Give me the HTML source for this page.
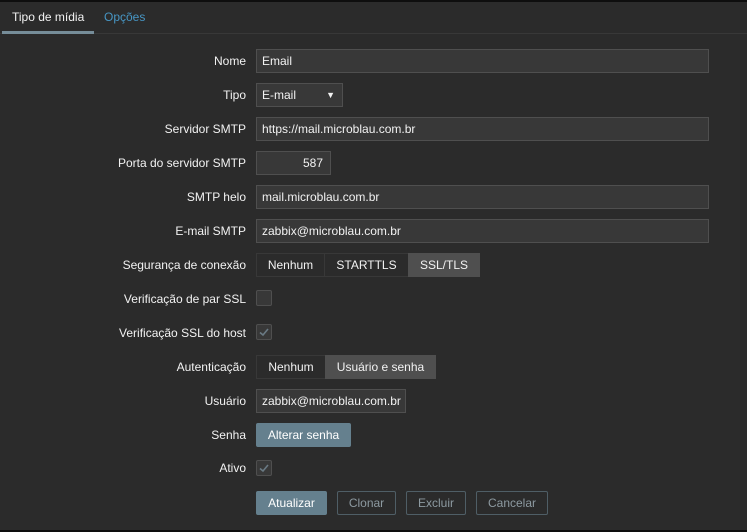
<!DOCTYPE html>
<html><head><meta charset="utf-8"><style>
*{box-sizing:border-box;margin:0;padding:0}
html,body{width:747px;height:532px;overflow:hidden;background:#2b2b2b;font-family:"Liberation Sans",Arial,sans-serif;font-size:12px;color:#f2f2f2}
.top{position:absolute;left:0;top:0;width:747px;height:2px;background:#0e0e0e}
.bot{position:absolute;left:0;top:530px;width:747px;height:2px;background:#0e0e0e}
.tabline{position:absolute;left:0;top:33px;width:747px;height:1px;background:#383838}
.tab{position:absolute;top:10px}
.uline{position:absolute;left:2px;top:31px;width:92px;height:3px;background:#768d99}
.lbl{position:absolute;right:501px;text-align:right;white-space:nowrap;line-height:24px}
.in{position:absolute;left:256px;height:24px;background:#383838;border:1px solid #4f4f4f;line-height:22px;padding-left:5px;white-space:nowrap}
.seg{position:absolute;height:24px;background:#2b2b2b;border:1px solid #383838;line-height:22px;text-align:center}
.seg.on{background:#4f4f4f;border-color:#4f4f4f}
.cb{position:absolute;left:256px;width:16px;height:16px;background:#383838;border:1px solid #4f4f4f;border-radius:2px}
.btn{position:absolute;height:24px;line-height:22px;text-align:center;border-radius:2px}
.pri{background:#65808e;border:1px solid #65808e;color:#fff}
.sec{border:1px solid #4f5e66;color:#8d9aa1}
</style></head><body>
<div class="top"></div><div class="bot"></div>
<div class="tabline"></div><div class="uline"></div>
<div class="tab" style="left:12px">Tipo de mídia</div>
<div class="tab" style="left:104px;color:#4796c4">Opções</div>

<div class="lbl" style="top:49px">Nome</div><div class="in" style="top:49px;width:453px">Email</div>
<div class="lbl" style="top:83px">Tipo</div><div class="in" style="top:83px;width:87px">E-mail<span style="position:absolute;right:7px;font-size:9px">▼</span></div>
<div class="lbl" style="top:117px">Servidor SMTP</div><div class="in" style="top:117px;width:453px">https://mail.microblau.com.br</div>
<div class="lbl" style="top:151px">Porta do servidor SMTP</div><div class="in" style="top:151px;width:75px;text-align:right;padding-right:7px">587</div>
<div class="lbl" style="top:185px">SMTP helo</div><div class="in" style="top:185px;width:453px">mail.microblau.com.br</div>
<div class="lbl" style="top:219px">E-mail SMTP</div><div class="in" style="top:219px;width:453px">zabbix@microblau.com.br</div>
<div class="lbl" style="top:253px">Segurança de conexão</div>
<div class="seg" style="top:253px;left:256px;width:69px">Nenhum</div>
<div class="seg" style="top:253px;left:324px;width:85px">STARTTLS</div>
<div class="seg on" style="top:253px;left:408px;width:72px">SSL/TLS</div>
<div class="lbl" style="top:287px">Verificação de par SSL</div><div class="cb" style="top:290px"></div>
<div class="lbl" style="top:321px">Verificação SSL do host</div><div class="cb" style="top:324px"><svg width="14" height="14" style="position:absolute;left:0;top:0"><path d="M3 7.5 L6 10 L11 4" fill="none" stroke="#6a7a84" stroke-width="1.6"/></svg></div>
<div class="lbl" style="top:355px">Autenticação</div>
<div class="seg" style="top:355px;left:256px;width:70px">Nenhum</div>
<div class="seg on" style="top:355px;left:325px;width:111px">Usuário e senha</div>
<div class="lbl" style="top:389px">Usuário</div><div class="in" style="top:389px;width:150px">zabbix@microblau.com.br</div>
<div class="lbl" style="top:423px">Senha</div><div class="btn pri" style="top:423px;left:256px;width:95px">Alterar senha</div>
<div class="lbl" style="top:456px">Ativo</div><div class="cb" style="top:460px"><svg width="14" height="14" style="position:absolute;left:0;top:0"><path d="M3 7.5 L6 10 L11 4" fill="none" stroke="#6a7a84" stroke-width="1.6"/></svg></div>
<div class="btn pri" style="top:491px;left:256px;width:71px">Atualizar</div>
<div class="btn sec" style="top:491px;left:337px;width:59px">Clonar</div>
<div class="btn sec" style="top:491px;left:406px;width:60px">Excluir</div>
<div class="btn sec" style="top:491px;left:476px;width:72px">Cancelar</div>
</body></html>
